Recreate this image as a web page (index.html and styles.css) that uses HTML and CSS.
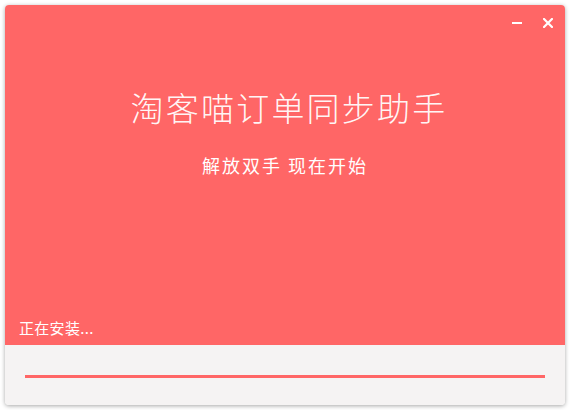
FILE: index.html
```html
<!DOCTYPE html>
<html lang="zh-CN">
<head>
<meta charset="utf-8">
<title>淘客喵订单同步助手</title>
<link rel="stylesheet" href="styles.css">
</head>
<body>
<div class="window">
  <div class="hero">
    <div class="controls">
      <span class="ctrl" title="最小化">
        <svg width="10" height="10" viewBox="0 0 10 10"><rect x="0" y="4" width="10" height="2" fill="#fff"/></svg>
      </span>
      <span class="ctrl" title="关闭">
        <svg width="10" height="10" viewBox="0 0 10 10"><path d="M1 1 L9 9 M9 1 L1 9" stroke="#fff" stroke-width="2.2" stroke-linecap="square" fill="none"/></svg>
      </span>
    </div>
    <h1 class="title">淘客喵订单同步助手</h1>
    <p class="subtitle">解放双手 现在开始</p>
    <div class="status">正在安装...</div>
  </div>
  <div class="footer">
    <div class="progress"></div>
  </div>
</div>
</body>
</html>
```
FILE: styles.css
```css
html, body {
  margin: 0;
  padding: 0;
  background: #ffffff;
}
body {
  font-family: "Noto Sans CJK SC", "Noto Sans", sans-serif;
  width: 570px;
  height: 410px;
  overflow: hidden;
}
.window {
  margin: 5px;
  width: 560px;
  height: 400px;
  display: flex;
  flex-direction: column;
  border-radius: 4px;
  overflow: hidden;
  box-shadow: 0 1px 4px rgba(0, 0, 0, 0.35);
}
.hero {
  height: 340px;
  background: #ff6666;
  display: flex;
  flex-direction: column;
  color: #ffffff;
}
.controls {
  display: flex;
  justify-content: flex-end;
  gap: 21px;
  padding: 13px 12px 0 0;
}
.ctrl {
  width: 10px;
  height: 10px;
  display: block;
}
.ctrl svg {
  display: block;
}
.title {
  margin: 63px 0 0;
  padding-left: 8px;
  font-size: 33px;
  line-height: 33px;
  font-weight: 300;
  letter-spacing: 2.2px;
  text-align: center;
  color: rgba(255, 255, 255, 0.95);
}
.subtitle {
  margin: 32px 0 0;
  font-size: 18px;
  line-height: 18px;
  font-weight: 400;
  letter-spacing: 2px;
  text-align: center;
}
.status {
  margin-top: auto;
  padding: 0 0 10px 14px;
  font-size: 15px;
  line-height: 15px;
  letter-spacing: 0.3px;
}
.footer {
  flex: 1;
  background: #f5f3f3;
  padding: 30px 20px 0;
}
.progress {
  height: 3px;
  background: #ff6666;
}
```
